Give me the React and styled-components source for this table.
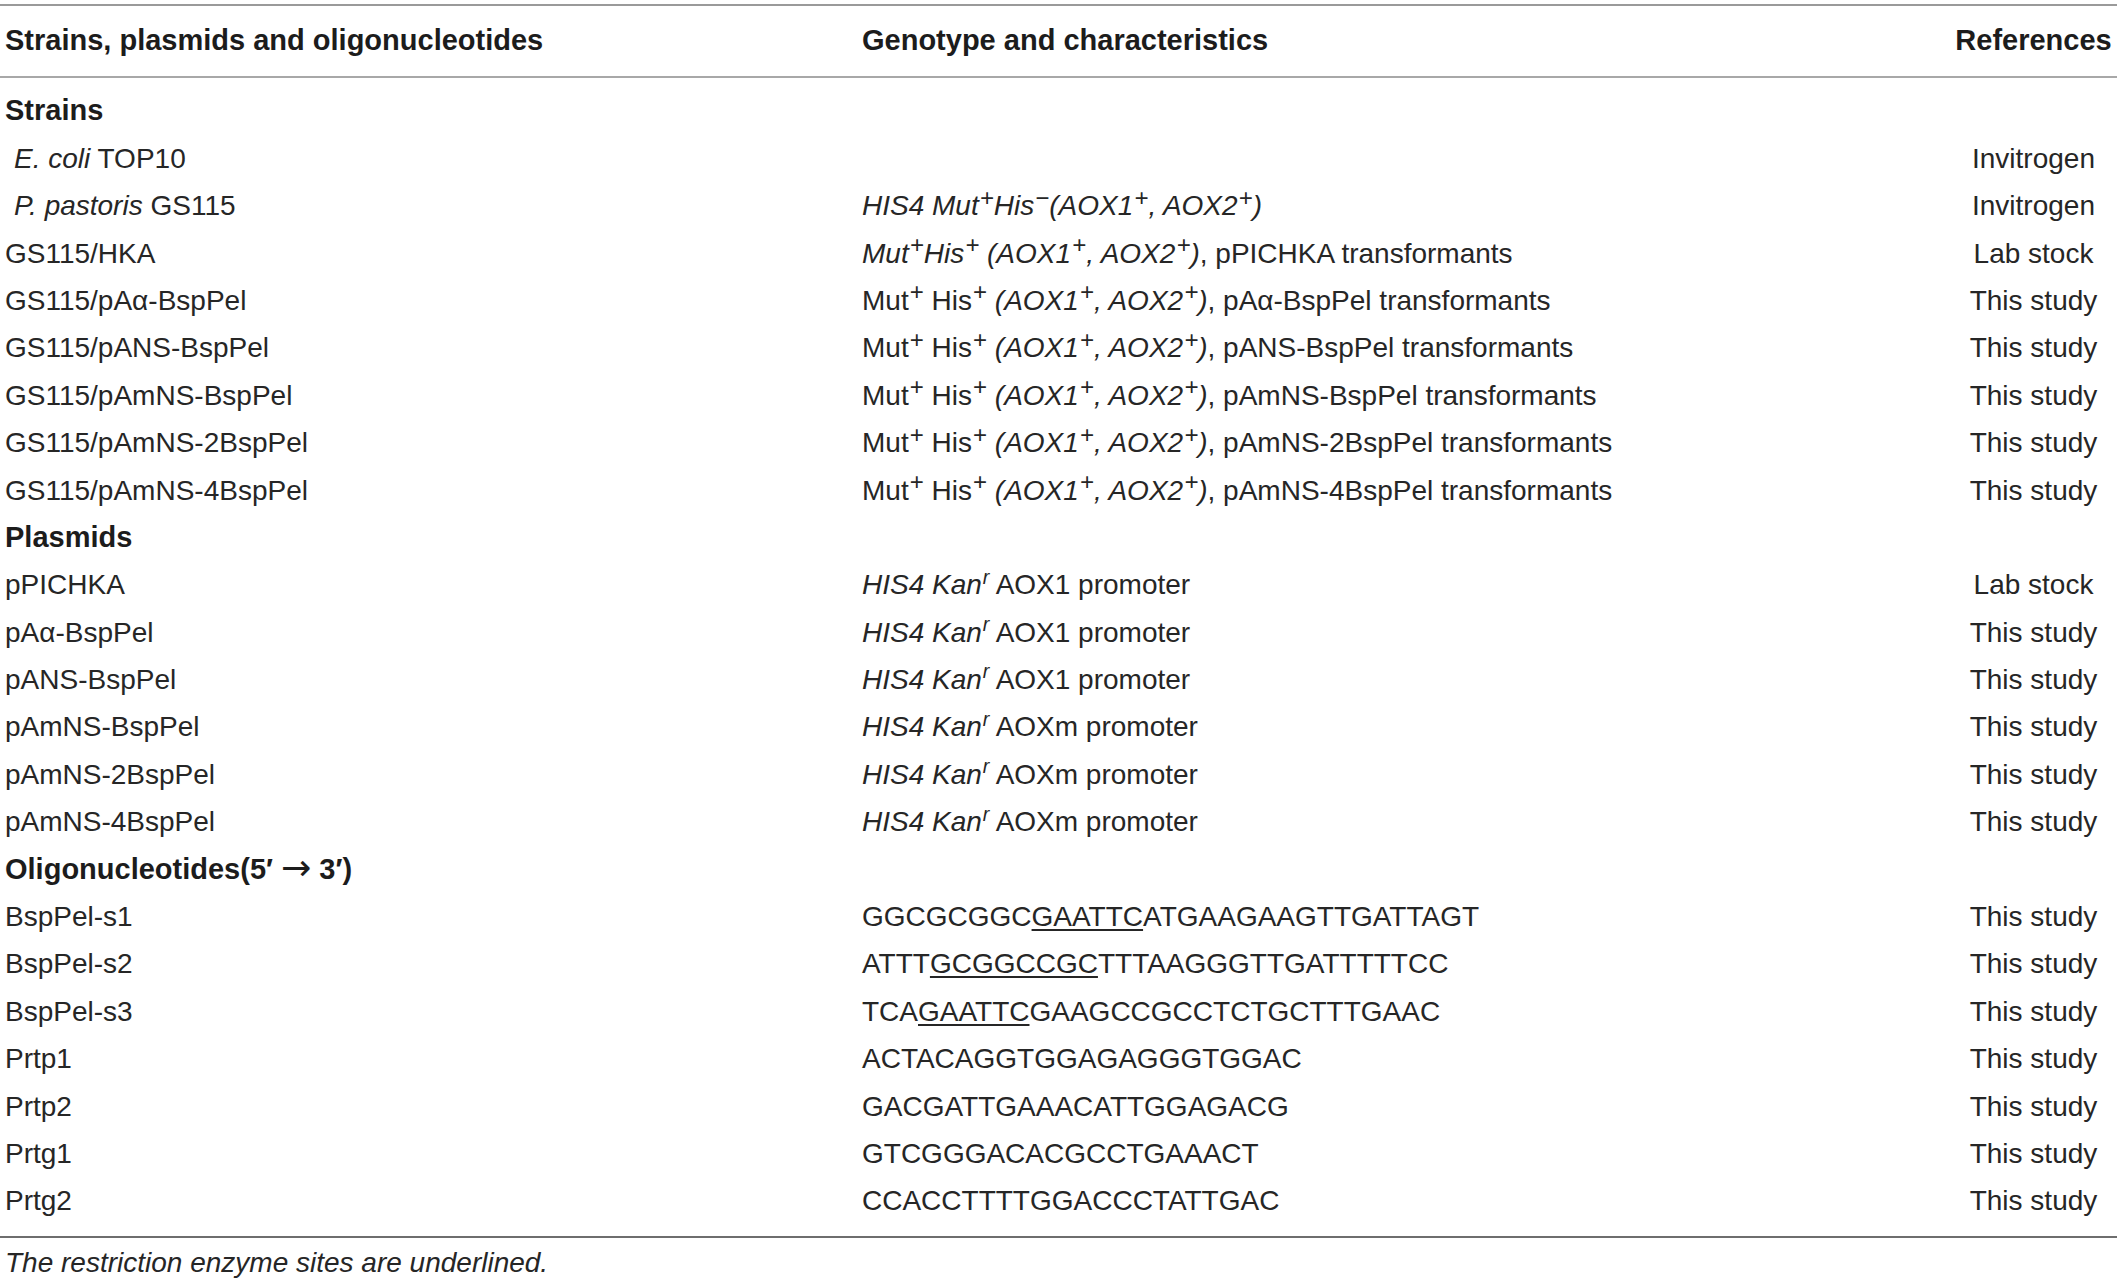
import React from "react";
import styled, { createGlobalStyle } from "styled-components";

const GlobalStyle = createGlobalStyle`
  html, body {
    margin: 0;
    padding: 0;
    background: #ffffff;
  }
  body {
    font-family: "Liberation Sans", Arial, Helvetica, sans-serif;
    color: #222222;
  }
`;

const Page = styled.div`
  padding-top: 4px;
  width: 2117px;
`;

const Table = styled.div`
  border-top: 2px solid #9a9a9a;
  border-bottom: 2px solid #6e6e6e;
`;

const Grid = styled.div`
  display: grid;
  grid-template-columns: 862px 1fr 167px;
  align-items: baseline;
  font-size: 28px;
  line-height: 47.4px;
  white-space: nowrap;
`;

const HeaderRow = styled(Grid)`
  padding: 11px 0 12px;
  border-bottom: 2px solid #a8a8a8;
  font-weight: 700;
  font-size: 29px;
  color: #1c1c1c;
`;

const Body = styled.div`
  padding: 9px 0 11px;
`;

const Row = styled(Grid)`
  height: 47.4px;
  font-weight: ${(p) => (p.$group ? 700 : 400)};
  font-size: ${(p) => (p.$group ? "29px" : "28px")};
  color: ${(p) => (p.$group ? "#1c1c1c" : "#262626")};
`;

const NameCell = styled.div`
  padding-left: ${(p) => (p.$indent ? "14px" : "5px")};
`;

const GenoCell = styled.div``;

const RefCell = styled.div`
  text-align: center;
`;

const I = styled.i`
  font-style: italic;
`;

const Sup = styled.sup`
  font-size: ${(p) => (p.$small ? "0.7em" : "0.86em")};
  line-height: 0;
  vertical-align: ${(p) => (p.$small ? "0.55em" : "0.4em")};
  margin-left: 1px;
`;

const Arrow = styled.span`
  display: inline-block;
  font-family: "DejaVu Sans", sans-serif;
  font-weight: 400;
  font-size: 1.25em;
  line-height: 0;
  padding: 0 8px;
  vertical-align: -0.04em;
`;

const U = styled.span`
  text-decoration: underline;
  text-decoration-thickness: 1.5px;
  text-underline-offset: 3px;
`;

const Footnote = styled.div`
  padding: 9px 0 0 5px;
  font-size: 28px;
  line-height: 32px;
  font-style: italic;
  color: #262626;
`;

const ambi = (
  <I>
    (AOX1<Sup>+</Sup>, AOX2<Sup>+</Sup>)
  </I>
);

const mutHis = (name) => (
  <>
    Mut<Sup>+</Sup> His<Sup>+</Sup> {ambi}, {name} transformants
  </>
);

const kan = (prom) => (
  <>
    <I>
      HIS4 Kan<Sup $small>r</Sup>
    </I>{" "}
    {prom} promoter
  </>
);

const sections = [
  {
    title: "Strains",
    rows: [
      { name: <><I>E. coli</I> TOP10</>, indent: true, geno: "", ref: "Invitrogen" },
      {
        name: <><I>P. pastoris</I> GS115</>,
        indent: true,
        geno: (
          <I>
            HIS4 Mut<Sup>+</Sup>His<Sup>−</Sup>(AOX1<Sup>+</Sup>, AOX2<Sup>+</Sup>)
          </I>
        ),
        ref: "Invitrogen",
      },
      {
        name: "GS115/HKA",
        geno: (
          <>
            <I>
              Mut<Sup>+</Sup>His<Sup>+</Sup> (AOX1<Sup>+</Sup>, AOX2<Sup>+</Sup>)
            </I>
            , pPICHKA transformants
          </>
        ),
        ref: "Lab stock",
      },
      { name: "GS115/pAα-BspPel", geno: mutHis("pAα-BspPel"), ref: "This study" },
      { name: "GS115/pANS-BspPel", geno: mutHis("pANS-BspPel"), ref: "This study" },
      { name: "GS115/pAmNS-BspPel", geno: mutHis("pAmNS-BspPel"), ref: "This study" },
      { name: "GS115/pAmNS-2BspPel", geno: mutHis("pAmNS-2BspPel"), ref: "This study" },
      { name: "GS115/pAmNS-4BspPel", geno: mutHis("pAmNS-4BspPel"), ref: "This study" },
    ],
  },
  {
    title: "Plasmids",
    rows: [
      { name: "pPICHKA", geno: kan("AOX1"), ref: "Lab stock" },
      { name: "pAα-BspPel", geno: kan("AOX1"), ref: "This study" },
      { name: "pANS-BspPel", geno: kan("AOX1"), ref: "This study" },
      { name: "pAmNS-BspPel", geno: kan("AOXm"), ref: "This study" },
      { name: "pAmNS-2BspPel", geno: kan("AOXm"), ref: "This study" },
      { name: "pAmNS-4BspPel", geno: kan("AOXm"), ref: "This study" },
    ],
  },
  {
    title: <>Oligonucleotides(5′<Arrow>→</Arrow>3′)</>,
    rows: [
      { name: "BspPel-s1", geno: <>GGCGCGGC<U>GAATTC</U>ATGAAGAAGTTGATTAGT</>, ref: "This study" },
      { name: "BspPel-s2", geno: <>ATTT<U>GCGGCCGC</U>TTTAAGGGTTGATTTTTCC</>, ref: "This study" },
      { name: "BspPel-s3", geno: <>TCA<U>GAATTC</U>GAAGCCGCCTCTGCTTTGAAC</>, ref: "This study" },
      { name: "Prtp1", geno: "ACTACAGGTGGAGAGGGTGGAC", ref: "This study" },
      { name: "Prtp2", geno: "GACGATTGAAACATTGGAGACG", ref: "This study" },
      { name: "Prtg1", geno: "GTCGGGACACGCCTGAAACT", ref: "This study" },
      { name: "Prtg2", geno: "CCACCTTTTGGACCCTATTGAC", ref: "This study" },
    ],
  },
];

export default function App() {
  return (
    <Page>
      <GlobalStyle />
      <Table>
        <HeaderRow>
          <NameCell>Strains, plasmids and oligonucleotides</NameCell>
          <GenoCell>Genotype and characteristics</GenoCell>
          <RefCell>References</RefCell>
        </HeaderRow>
        <Body>
          {sections.map((s, si) => (
            <React.Fragment key={si}>
              <Row $group>
                <NameCell>{s.title}</NameCell>
                <GenoCell />
                <RefCell />
              </Row>
              {s.rows.map((r, i) => (
                <Row key={i}>
                  <NameCell $indent={r.indent}>{r.name}</NameCell>
                  <GenoCell>{r.geno}</GenoCell>
                  <RefCell>{r.ref}</RefCell>
                </Row>
              ))}
            </React.Fragment>
          ))}
        </Body>
      </Table>
      <Footnote>The restriction enzyme sites are underlined.</Footnote>
    </Page>
  );
}
